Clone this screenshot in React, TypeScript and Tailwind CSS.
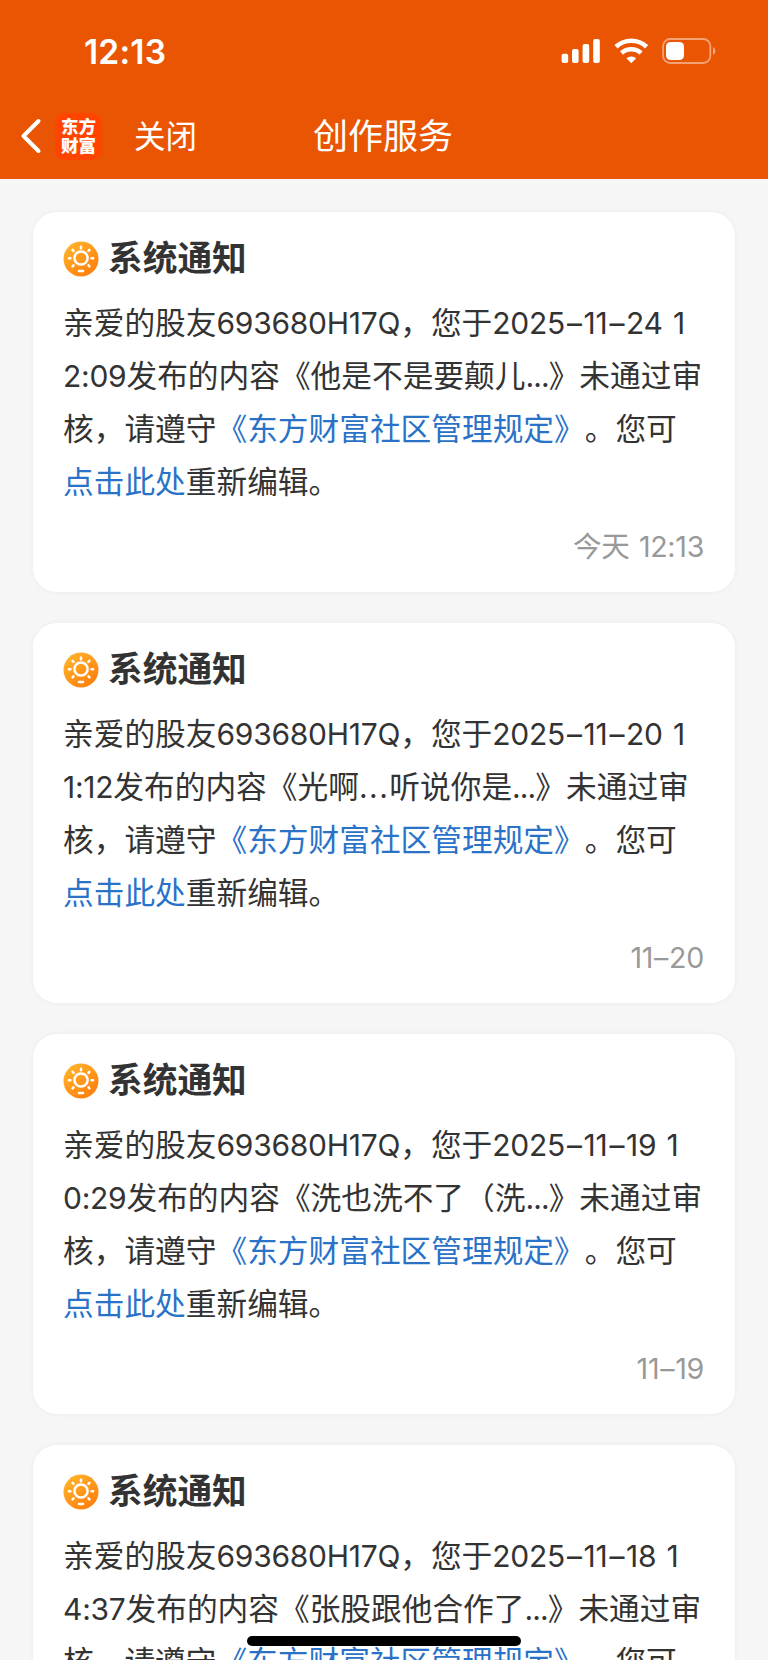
import React from "react";

type Notice = {
  date: string[];
  hour: string;
  clock: string;
  title: React.ReactNode;
  stamp: React.ReactNode;
};

const Latin = ({ children }: { children: React.ReactNode }) => (
  <span className="text-[30px] tracking-[-0.25px] [word-spacing:2px]">{children}</span>
);

const Dots = () => <span className="text-[30px] tracking-[-0.9px]">...</span>;
const WideDots = () => <span className="text-[30px] tracking-[1.5px]">...</span>;

const Dash = () => <span className="mx-[1.9px]">–</span>;

const notices: Notice[] = [
  { date: ["2025", "11", "24"], hour: "1", clock: "2:09", title: <>他是不是要颠儿<Dots /></>, stamp: <>今天 12:13</> },
  { date: ["2025", "11", "20"], hour: "1", clock: "1:12", title: <>光啊<WideDots />听说你是<Dots /></>, stamp: <>11<span className="mx-[1px]">–</span>20</> },
  { date: ["2025", "11", "19"], hour: "1", clock: "0:29", title: <>洗也洗不了（洗<Dots /></>, stamp: <>11<span className="mx-[1px]">–</span>19</> },
  { date: ["2025", "11", "18"], hour: "1", clock: "4:37", title: <>张股跟他合作了<Dots /></>, stamp: <>11<span className="mx-[1px]">–</span>18</> },
];

function SunIcon() {
  return (
    <svg className="h-[36px] w-[36px] shrink-0" viewBox="0 0 36 36" fill="none">
      <defs>
        <linearGradient id="sun" x1="4" y1="2" x2="30" y2="34" gradientUnits="userSpaceOnUse">
          <stop stopColor="#ffb52c" />
          <stop offset="1" stopColor="#ff7d0c" />
        </linearGradient>
      </defs>
      <circle cx="18" cy="18" r="17.5" fill="url(#sun)" />
      <circle cx="18" cy="17" r="6.6" stroke="#fff" strokeWidth="2.5" />
      <path
        d="M18 5.8v1.4M9.6 8.9l.9.9M26.4 8.9l-.9.9M5.9 17.3h1.5M28.6 17.3h1.5M9.6 25.3l.9-.9M26.4 25.3l-.9-.9M16 30h4"
        stroke="#fff"
        strokeWidth="2.5"
        strokeLinecap="round"
      />
    </svg>
  );
}

function Card({ notice }: { notice: Notice }) {
  const [year, month, day] = notice.date;
  return (
    <article className="flex h-[380px] shrink-0 flex-col rounded-[24px] bg-white pl-[30px] pr-[31px] pt-[22px] shadow-[0_0_5px_rgba(0,0,0,0.05)]">
      <header className="flex h-[49px] items-center gap-[9px]">
        <SunIcon />
        <h2 className="h-[50px] text-[34.7px] font-bold leading-[48px] text-[#333]">系统通知</h2>
      </header>
      <div className="mt-[12.5px] whitespace-nowrap text-[30.7px] leading-[53.3px] text-[#333]">
        <p className="h-[53.3px]">
          亲爱的股友<Latin>693680H17Q</Latin>，您于
          <Latin>{year}<Dash />{month}<Dash />{day} {notice.hour}</Latin>
        </p>
        <p className="h-[53.3px]"><Latin>{notice.clock}</Latin>发布的内容《{notice.title}》未通过审</p>
        <p className="h-[53.3px]">核，请遵守<span className="text-[#2a72c8]">《东方财富社区管理规定》</span>。您可</p>
        <p className="h-[53.3px]"><span className="text-[#2a72c8]">点击此处</span>重新编辑。</p>
      </div>
      <time className="mt-[18px] self-end text-[28.6px] leading-[40px] tracking-[-0.3px] text-[#999] [word-spacing:1.5px]">{notice.stamp}</time>
    </article>
  );
}

export default function App() {
  return (
    <div className="relative flex h-[1663px] w-[768px] flex-col overflow-hidden bg-white font-['Inter','Noto_Sans_CJK_SC',sans-serif] [text-spacing-trim:space-all]">
      <div className="flex h-[179px] shrink-0 flex-col bg-[#ea5504] text-white">
        <div className="flex h-[102px] items-center justify-between pl-[84px] pr-[52px]">
          <span className="pt-[2px] text-[33.5px] font-semibold tracking-[0.2px]">12:13</span>
          <svg className="h-[26px] w-[155px]" viewBox="0 0 155 26" fill="none">
            <g fill="#fff">
              <rect x="0.6" y="15.8" width="6.6" height="9.2" rx="2" />
              <rect x="11" y="11" width="6.6" height="14" rx="2" />
              <rect x="21.6" y="6" width="6.6" height="19" rx="2" />
              <rect x="32.2" y="1" width="6.6" height="24" rx="2" />
            </g>
            <path d="M55 8.8a22.5 22.5 0 0 1 30.6 0M60.5 15a14.5 14.5 0 0 1 19.6 0" stroke="#fff" strokeWidth="4.6" />
            <path d="M65.4 20.2a7.5 7.5 0 0 1 9.8 0l-4.9 5z" fill="#fff" />
            <rect x="102.1" y="1" width="47.2" height="24" rx="7" stroke="#fff" strokeOpacity=".45" strokeWidth="1.8" />
            <rect x="105" y="4" width="18" height="18" rx="4.5" fill="#fff" />
            <path d="M152 9v8c3-1.4 3-6.6 0-8z" fill="#fff" fillOpacity=".5" />
          </svg>
        </div>
        <div className="grid h-[68px] grid-cols-[1fr_auto_1fr] items-center">
          <div className="flex items-center">
            <svg className="ml-[19.5px] h-[36px] w-[22px]" viewBox="0 0 22 36" fill="none">
              <path d="M18.5 3 3.5 18l15 15" stroke="#fff" strokeWidth="4" strokeLinecap="round" strokeLinejoin="round" />
            </svg>
            <div className="ml-[13.5px] flex h-[47px] w-[47px] flex-col items-center justify-center rounded-[10px] bg-[#ff4400] text-[17.5px] font-black leading-[19.5px]">
              <span>东方</span>
              <span>财富</span>
            </div>
            <span className="ml-[32px] pt-[1px] text-[31.5px] font-normal">关闭</span>
          </div>
          <h1 className="pr-[2px] text-[35px] font-normal">创作服务</h1>
          <div />
        </div>
      </div>
      <main className="flex h-[1481px] shrink-0 flex-col gap-[31px] overflow-hidden bg-[#f6f6f6] px-[33px] pt-[33px]">
        {notices.map((n) => (
          <Card key={n.date.join("")} notice={n} />
        ))}
      </main>
      <div className="absolute left-[247px] top-[1636px] h-[10px] w-[274px] rounded-full bg-black" />
    </div>
  );
}
